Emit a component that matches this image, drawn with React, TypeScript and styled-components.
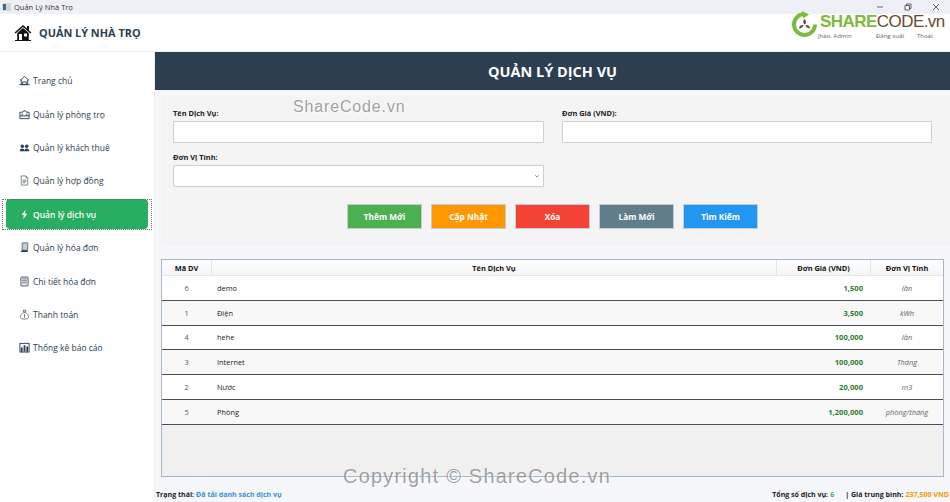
import React from 'react';
import styled, { createGlobalStyle } from 'styled-components';

const Global = createGlobalStyle`
  html, body { margin: 0; padding: 0; background: #fff; }
  body { font-family: "Open Sans", "Noto Sans", "Liberation Sans", sans-serif; overflow: hidden; }
  * { box-sizing: border-box; }
`;

const Shell = styled.div`
  position: relative;
  width: 950px;
  height: 502px;
  display: flex;
  flex-direction: column;
  overflow: hidden;
`;

const TitleBar = styled.div`
  height: 14px;
  background: #eff0f7;
  display: flex;
  align-items: center;
  padding-left: 2px;
  flex: none;
`;
const TitleText = styled.span`
  font-size: 7.5px;
  color: #333;
  margin-left: 3px;
`;
const WinControls = styled.div`
  margin-left: auto;
  display: flex;
  align-items: center;
  gap: 20px;
  padding-right: 10px;
  color: #444;
`;

const AppHeader = styled.header`
  height: 38px;
  flex: none;
  background: #fff;
  border-bottom: 1px solid #eceef0;
  display: flex;
  align-items: center;
  padding-left: 14px;
`;
const AppTitle = styled.h1`
  margin: 0 0 0 7px;
  font-size: 10.9px;
  font-weight: 700;
  color: #2c3e50;
`;

const Body = styled.div`
  flex: 1;
  display: flex;
  min-height: 0;
`;

const Sidebar = styled.nav`
  width: 155px;
  flex: none;
  background: #fff;
  border-right: 1px solid #eceff2;
  padding-top: 12px;
  display: flex;
  flex-direction: column;
`;
const NavSlot = styled.div<{ $active?: boolean }>`
  height: 33.4px;
  margin: 0 1px;
  padding: 1.7px 5px;
  display: flex;
  align-items: stretch;
  ${p => (p.$active ? 'outline: 1px dotted #666; outline-offset: -2px;' : '')}
`;
const NavItem = styled.div<{ $active?: boolean }>`
  flex: 1;
  border-radius: 4px;
  display: flex;
  align-items: center;
  gap: 3px;
  padding-left: 13px;
  font-size: 8.5px;
  font-weight: ${p => (p.$active ? 600 : 500)};
  color: ${p => (p.$active ? '#fff' : '#2c3e50')};
  background: ${p => (p.$active ? '#27ae60' : 'transparent')};
  svg { flex: none; }
`;

const Main = styled.main`
  flex: 1;
  min-width: 0;
  background: #f5f7fa;
  display: flex;
  flex-direction: column;
`;
const PageTitle = styled.div`
  height: 38px;
  flex: none;
  background: #2c3e50;
  color: #fff;
  font-size: 14.5px;
  font-weight: 700;
  display: flex;
  align-items: center;
  justify-content: center;
`;

const FormPanel = styled.section`
  margin: 6px 0 13px 6px;
  height: 150px;
  flex: none;
  background: #f4f4f4;
  padding: 12px 18px 0 12px;
`;
const FormGrid = styled.div`
  display: grid;
  grid-template-columns: 371px 370px;
  column-gap: 18px;
  row-gap: 9px;
`;
const Field = styled.div`
  display: flex;
  flex-direction: column;
`;
const Label = styled.label`
  font-size: 7.4px;
  font-weight: 700;
  color: #222;
  height: 13px;
  line-height: 10px;
`;
const TextInput = styled.div`
  height: 22px;
  background: #fff;
  border: 1px solid #cfcfcf;
  border-radius: 1px;
`;
const SelectBox = styled(TextInput)`
  display: flex;
  align-items: center;
  justify-content: flex-end;
  padding-right: 3px;
  color: #777;
`;

const ButtonRow = styled.div`
  display: flex;
  justify-content: center;
  gap: 9px;
  margin-top: 17px;
`;
const ActionButton = styled.div<{ $bg: string }>`
  width: 75px;
  height: 25px;
  background: ${p => p.$bg};
  border: 1px solid #c9ccce;
  color: #fff;
  font-size: 8.3px;
  font-weight: 700;
  display: flex;
  align-items: center;
  justify-content: center;
`;

const TableFrame = styled.section`
  margin: 0 6px 0 6px;
  height: 218px;
  flex: none;
  background: #f0f0f0;
  border: 1px solid #a9b8c9;
  display: flex;
  flex-direction: column;
`;
const HeaderRow = styled.div`
  height: 16px;
  flex: none;
  display: grid;
  grid-template-columns: 50px 565px 94px 1fr;
  background: linear-gradient(#ffffff, #f4f5f7);
  border-bottom: 1px solid #e4e6e9;
`;
const HeaderCell = styled.div`
  font-size: 7.4px;
  font-weight: 700;
  color: #111;
  display: flex;
  align-items: center;
  justify-content: center;
  border-right: 1px solid #e4e6e9;
  &:last-child { border-right: none; }
`;
const Row = styled.div<{ $alt: boolean }>`
  height: 24.8px;
  flex: none;
  display: grid;
  grid-template-columns: 50px 565px 94px 1fr;
  align-items: center;
  background: ${p => (p.$alt ? '#f8f8f8' : '#fff')};
  border-bottom: 1px solid #4d4f52;
`;
const IdCell = styled.div`
  font-size: 7.4px;
  color: #555;
  text-align: center;
  padding-right: 1px;
`;
const NameCell = styled.div`
  font-size: 7.4px;
  font-weight: 500;
  color: #222;
  padding-left: 5px;
`;
const PriceCell = styled.div`
  font-size: 7.6px;
  font-weight: 700;
  color: #2e7d32;
  text-align: right;
  padding-right: 8px;
`;
const UnitCell = styled.div`
  font-size: 7.4px;
  font-style: italic;
  color: #666;
  text-align: center;
`;

const StatusBar = styled.footer`
  flex: 1;
  display: flex;
  align-items: center;
  justify-content: space-between;
  padding: 9px 1px 0 1px;
  font-size: 7.05px;
  font-weight: 700;
  color: #222;
`;
const StatusGroup = styled.div`
  display: flex;
  align-items: center;
`;
const Colored = styled.span<{ $c: string; $ml?: number; $mr?: number }>`
  color: ${p => p.$c};
  margin-left: ${p => p.$ml ?? 2}px;
  margin-right: ${p => p.$mr ?? 0}px;
`;

const Watermark = styled.div<{ $x: number; $y: number; $size: number; $ls: number }>`
  position: absolute;
  left: ${p => p.$x}px;
  top: ${p => p.$y}px;
  font-family: "Liberation Sans", sans-serif;
  font-size: ${p => p.$size}px;
  letter-spacing: ${p => p.$ls}px;
  color: rgba(110, 110, 110, 0.65);
  text-shadow: 1px 1px 1px rgba(255, 255, 255, 0.9);
  white-space: nowrap;
`;

const Logo = styled.div`
  position: absolute;
  left: 791px;
  top: 11px;
  width: 152px;
  height: 30px;
  display: flex;
  align-items: flex-start;
  svg { flex: none; }
`;
const LogoWord = styled.div`
  font-family: "Liberation Sans", sans-serif;
  font-size: 17px;
  line-height: 16px;
  margin: 3px 0 0 2px;
  white-space: nowrap;
  letter-spacing: -0.55px;
`;
const LogoShare = styled.span`
  color: #7cbb3c;
  font-weight: 700;
`;
const LogoCode = styled.span`
  color: #6b4a2e;
`;
const LogoSub = styled.div`
  position: absolute;
  left: 27px;
  top: 21.5px;
  width: 122px;
  display: flex;
  line-height: 6px;
  font-size: 6px;
  color: #666;
  white-space: nowrap;
`;
const SubItem = styled.span<{ $w: number }>`
  width: ${p => p.$w}px;
`;

const stroke = { fill: 'none', stroke: '#2c3e50', strokeWidth: 1 } as const;

const NavIcon = ({ k, active }: { k: string; active?: boolean }) => {
  const s = { width: 11, height: 11, viewBox: '0 0 12 12' };
  switch (k) {
    case 'home':
      return <svg {...s}><path d="M1 6 6 1.500 11 6M2.500 5v5.500h7V5" {...stroke} /><path d="M4 10.500V7.500h4v3M.5 10.500h11" {...stroke} /></svg>;
    case 'rooms':
      return <svg {...s}><path d="M1 3.500h3l1-1.500h2l1 1.500h3v7H1z" {...stroke} /><path d="M1 7.500h10M3.500 5v2.500M8.500 5v2.500" {...stroke} /></svg>;
    case 'people':
      return <svg {...s}><g fill="#2c3e50"><circle cx="3.600" cy="4.600" r="1.900" /><circle cx="8.400" cy="4.600" r="1.900" /><path d="M.8 10c0-2 1.200-3 2.800-3s2.400 1 2.400 3zM6 10c0-2 .8-3 2.400-3s2.800 1 2.800 3z" /></g></svg>;
    case 'doc':
      return <svg {...s}><path d="M2.500 1h5l2 2v8h-7zM7.500 1v2h2M4 5.500h4M4 7h4M4 8.500h3" fill="none" stroke="#6c7780" strokeWidth="0.9" /></svg>;
    case 'bolt':
      return <svg {...s}><path d="M7 .8 3 6.600h2.300L4.600 11.200 9 5.200H6.600z" fill={active ? '#fff' : '#333'} /></svg>;
    case 'receipt':
      return <svg {...s}><path d="M3.500 1h6v8h-6z" fill="#c9ced2" stroke="#4a5a68" strokeWidth="0.9" /><path d="M1.500 10.800h8V9h-6.500z" fill="#2c3e50" /></svg>;
    case 'detail':
      return <svg {...s}><rect x="2" y="1" width="8" height="10" rx="1" fill="#d5d9dc" stroke="#4a5a68" strokeWidth="0.9" /><path d="M3.500 3h5M3.500 5h5M3.500 7h5" stroke="#6c7780" strokeWidth="0.8" /></svg>;
    case 'bag':
      return <svg {...s}><path d="M4.500 1.200h3L6.800 3.400H5.200zM5 3.600C3 5 1.600 6.600 1.600 8.400c0 1.800 1.600 2.600 4.400 2.600s4.400-.8 4.400-2.600C10.400 6.600 9 5 7 3.600z" fill="none" stroke="#5a6872" strokeWidth="0.9" /><path d="M6 5.500v4" stroke="#5a6872" strokeWidth="0.9" /></svg>;
    default:
      return <svg {...s}><rect x="1" y="1.500" width="10" height="9.500" fill="#fff" stroke="#2c3e50" strokeWidth="1" /><path d="M2 10.500V6h2v4.500zM5 10.500V3.500h2v7zM8 10.500V5h2v5.500z" fill="#2c3e50" /></svg>;
  }
};

const navs = [
  ['home', 'Trang chủ'],
  ['rooms', 'Quản lý phòng trọ'],
  ['people', 'Quản lý khách thuê'],
  ['doc', 'Quản lý hợp đồng'],
  ['bolt', 'Quản lý dịch vụ'],
  ['receipt', 'Quản lý hóa đơn'],
  ['detail', 'Chi tiết hóa đơn'],
  ['bag', 'Thanh toán'],
  ['chart', 'Thống kê báo cáo'],
];

const rows = [
  ['6', 'demo', '1,500', 'lần'],
  ['1', 'Điện', '3,500', 'kWh'],
  ['4', 'hehe', '100,000', 'lần'],
  ['3', 'Internet', '100,000', 'Tháng'],
  ['2', 'Nước', '20,000', 'm3'],
  ['5', 'Phòng', '1,200,000', 'phòng/tháng'],
];

const buttons: [string, string][] = [
  ['Thêm Mới', '#4caf50'],
  ['Cập Nhật', '#ff9800'],
  ['Xóa', '#f44336'],
  ['Làm Mới', '#607d8b'],
  ['Tìm Kiếm', '#2196f3'],
];

export default function App() {
  return (
    <Shell>
      <Global />
      <TitleBar>
        <svg width="9" height="8" viewBox="0 0 9 8"><rect width="9" height="8" fill="#cfd6dc" /><rect x="1" y="1" width="3" height="6" fill="#3f6f7f" /></svg>
        <TitleText>Quản Lý Nhà Trọ</TitleText>
        <WinControls>
          <svg width="8" height="8" viewBox="0 0 8 8"><path d="M1 4h6" stroke="#444" strokeWidth="0.8" /></svg>
          <svg width="8" height="8" viewBox="0 0 8 8"><path d="M1 2.500h4.500V7H1zM2.500 2.500V1H7v4.500H5.500" fill="none" stroke="#444" strokeWidth="0.8" /></svg>
          <svg width="8" height="8" viewBox="0 0 8 8"><path d="M1 1l6 6M7 1 1 7" stroke="#444" strokeWidth="0.8" /></svg>
        </WinControls>
      </TitleBar>
      <AppHeader>
        <svg width="18" height="17" viewBox="0 0 18 17">
          <path d="M9 1 .6 8.400l1 1.100L9 3l7.400 6.500 1-1.100z" fill="#111" />
          <path d="M3.200 9v7H1v1h16v-1h-2.200V9L9 4z" fill="#111" />
          <rect x="5" y="10" width="3" height="6" fill="#fff" />
          <rect x="10" y="9.500" width="3" height="3" fill="#fff" />
          <rect x="13" y="2" width="2" height="4" fill="#111" />
        </svg>
        <AppTitle>QUẢN LÝ NHÀ TRỌ</AppTitle>
      </AppHeader>
      <Body>
        <Sidebar>
          {navs.map(([k, t], i) => (
            <NavSlot key={k} $active={i === 4}>
              <NavItem $active={i === 4}>
                <NavIcon k={k} active={i === 4} />
                {t}
              </NavItem>
            </NavSlot>
          ))}
        </Sidebar>
        <Main>
          <PageTitle>QUẢN LÝ DỊCH VỤ</PageTitle>
          <FormPanel>
            <FormGrid>
              <Field>
                <Label>Tên Dịch Vụ:</Label>
                <TextInput />
              </Field>
              <Field>
                <Label>Đơn Giá (VND):</Label>
                <TextInput />
              </Field>
              <Field>
                <Label>Đơn Vị Tính:</Label>
                <SelectBox>
                  <svg width="6" height="6" viewBox="0 0 6 6"><path d="M1.200 2.200 3 4l1.800-1.800" fill="none" stroke="#777" strokeWidth="0.8" /></svg>
                </SelectBox>
              </Field>
            </FormGrid>
            <ButtonRow>
              {buttons.map(([t, c]) => (
                <ActionButton key={t} $bg={c}>{t}</ActionButton>
              ))}
            </ButtonRow>
          </FormPanel>
          <TableFrame>
            <HeaderRow>
              <HeaderCell>Mã DV</HeaderCell>
              <HeaderCell>Tên Dịch Vụ</HeaderCell>
              <HeaderCell>Đơn Giá (VND)</HeaderCell>
              <HeaderCell>Đơn Vị Tính</HeaderCell>
            </HeaderRow>
            {rows.map((r, i) => (
              <Row key={r[0]} $alt={i % 2 === 1}>
                <IdCell>{r[0]}</IdCell>
                <NameCell>{r[1]}</NameCell>
                <PriceCell>{r[2]}</PriceCell>
                <UnitCell>{r[3]}</UnitCell>
              </Row>
            ))}
          </TableFrame>
          <StatusBar>
            <StatusGroup>
              Trạng thái:<Colored $c="#3a8fd6">Đã tải danh sách dịch vụ</Colored>
            </StatusGroup>
            <StatusGroup>
              Tổng số dịch vụ:<Colored $c="#4caf50" $mr={11}>6</Colored>| Giá trung bình:<Colored $c="#ff9800">237,500 VND</Colored>
            </StatusGroup>
          </StatusBar>
        </Main>
      </Body>
      <Logo>
        <svg width="27" height="27" viewBox="0 0 27 27">
          <path d="M13.500 3a10.500 10.500 0 1 0 10.500 10.500" fill="none" stroke="#7cbb3c" strokeWidth="4" />
          <path d="M11 0l7 3.500-6 4z" fill="#7cbb3c" />
          <path d="M13.500 8c2 2 2 4 .5 5.500-2-1-2.500-3.500-.5-5.500zM8 17c.5-2.500 2.500-3.500 4.500-3-.3 2.300-2.500 3.700-4.500 3zM19 17c-2 .7-4.200-.7-4.500-3 2-.5 4 .5 4.500 3z" fill="#6b4a2e" />
        </svg>
        <LogoWord>
          <LogoShare>SHARE</LogoShare>
          <LogoCode>CODE.vn</LogoCode>
        </LogoWord>
        <LogoSub>
          <SubItem $w={58}>Jhào, Admin</SubItem>
          <SubItem $w={41}>Đăng xuất</SubItem>
          <SubItem $w={20}>Thoát</SubItem>
        </LogoSub>
      </Logo>
      <Watermark $x={293} $y={98} $size={16} $ls={0.85}>ShareCode.vn</Watermark>
      <Watermark $x={343} $y={465} $size={20} $ls={1.2}>Copyright © ShareCode.vn</Watermark>
    </Shell>
  );
}
